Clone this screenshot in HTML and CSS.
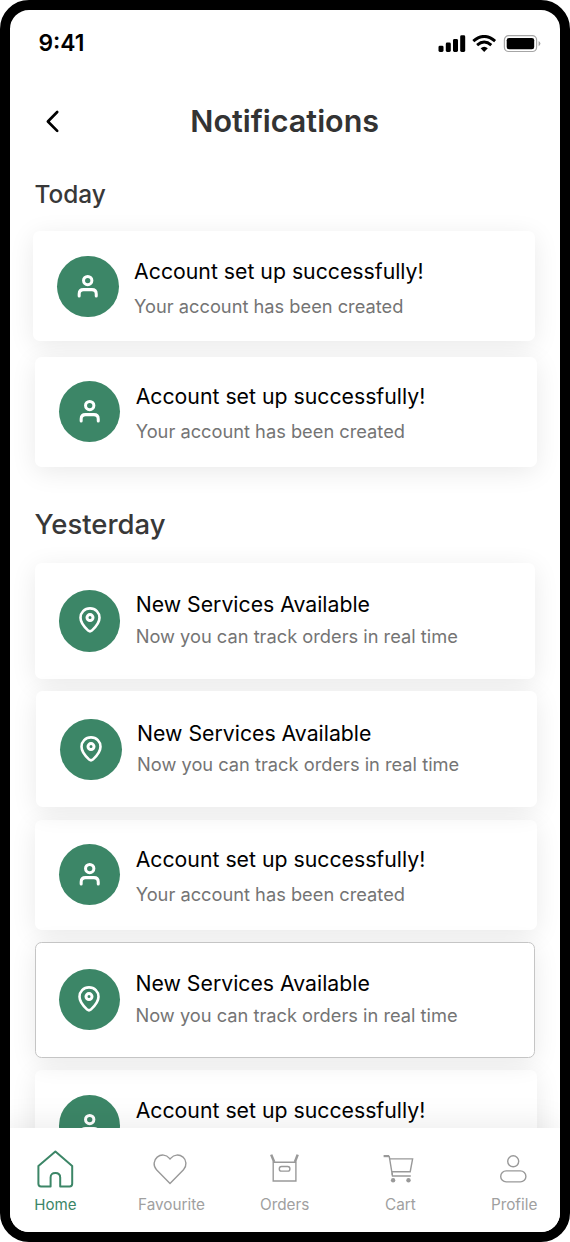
FILE: index.html
```html
<!DOCTYPE html>
<html lang="en">
<head>
<meta charset="utf-8">
<title>Notifications</title>
<link rel="stylesheet" href="styles.css">
</head>
<body>
<svg width="0" height="0" class="defs">
  <symbol id="user" viewBox="0 0 24 24"><g fill="none" stroke="#fff" stroke-width="2.9" stroke-linecap="round"><circle cx="12.2" cy="6.3" r="4"/><path d="M4 21.2V19.2Q4 15 8.200 15H16.200Q20.400 15 20.400 19.200V21.200"/></g></symbol>
  <symbol id="pin" viewBox="0 0 24 26"><g fill="none" stroke="#fff" stroke-width="2.6" stroke-linejoin="round"><path d="M12 1.400C6.400 1.400 2.500 5.700 2.500 10.800C2.500 16.200 6.300 20.100 10.200 23.600Q12 25.100 13.800 23.600C17.700 20.100 21.500 16.200 21.500 10.800C21.500 5.700 17.600 1.400 12 1.400Z"/><circle cx="12" cy="10.600" r="3" stroke-width="3"/></g></symbol>
</svg>
<div class="phone">
  <main class="screen">
    <div class="status">
      <span class="time">9:41</span>
      <svg class="indicators" width="104" height="20" viewBox="0 0 104 20">
        <rect x="0.500" y="10.700" width="5" height="6.300" rx="1.400"/>
        <rect x="7.800" y="7.500" width="5" height="9.500" rx="1.400"/>
        <rect x="15" y="4" width="5" height="13" rx="1.400"/>
        <rect x="22.200" y="0.300" width="5" height="16.700" rx="1.400"/>
        <g fill="none" stroke="#000" stroke-width="2.900"><path d="M35.300 6.100Q46.200-3.300 57.100 6.100"/><path d="M39.100 10.100Q46.200 4.100 53.300 10.100"/></g>
        <path d="M42.600 13.300Q46.200 10.300 49.800 13.300L46.200 16.900Z"/>
        <rect x="66.400" y="0.600" width="32.200" height="15.900" rx="4.300" fill="#fff" stroke="#a6a6a6" stroke-width="1.200"/>
        <rect x="68.700" y="2.900" width="27.500" height="11.300" rx="2.300"/>
        <path d="M100.600 5.900Q102.400 7 102.400 8.500T100.600 11.200Z" fill="#a0a0a0"/>
      </svg>
    </div>
    <header class="header">
      <svg class="back" width="16" height="24" viewBox="0 0 16 24"><path d="M13.200 3L3.900 12.500L13.200 21.900" fill="none" stroke="#000" stroke-width="2.700" stroke-linecap="round" stroke-linejoin="round"/></svg>
      <h1>Notifications</h1>
    </header>
    <h2 class="today">Today</h2>
    <section class="list">
      <article class="card first"><span class="disc"><svg class="user"><use href="#user"/></svg></span><div><h3>Account set up successfully!</h3><p>Your account has been created</p></div></article>
      <article class="card"><span class="disc"><svg class="user"><use href="#user"/></svg></span><div><h3>Account set up successfully!</h3><p>Your account has been created</p></div></article>
    </section>
    <h2 class="yesterday">Yesterday</h2>
    <section class="list tight">
      <article class="card service"><span class="disc"><svg class="pin"><use href="#pin"/></svg></span><div><h3>New Services Available</h3><p>Now you can track orders in real time</p></div></article>
      <article class="card service shifted"><span class="disc"><svg class="pin"><use href="#pin"/></svg></span><div><h3>New Services Available</h3><p>Now you can track orders in real time</p></div></article>
      <article class="card"><span class="disc"><svg class="user"><use href="#user"/></svg></span><div><h3>Account set up successfully!</h3><p>Your account has been created</p></div></article>
      <article class="card service outlined"><span class="disc"><svg class="pin"><use href="#pin"/></svg></span><div><h3>New Services Available</h3><p>Now you can track orders in real time</p></div></article>
      <article class="card last"><span class="disc"><svg class="user"><use href="#user"/></svg></span><div><h3>Account set up successfully!</h3></div></article>
    </section>
  </main>
  <nav class="tabs">
    <a class="tab active"><svg width="40" height="40" viewBox="0 0 40 40"><path d="M20.400 2.500L37.200 17V34.800Q37.200 37.500 34.600 37.500H25.200V28.500Q25.200 24 20.400 24T15.600 28.500V37.500H6Q3.400 37.500 3.400 34.800V17Z" stroke-width="2" stroke-linejoin="round"/></svg><span>Home</span></a>
    <a class="tab favourite"><svg width="40" height="40" viewBox="0 0 40 40"><path d="M18 34.500L4.500 20.700C0.800 16.800 1.700 11.100 5.200 8.100C9 5 14.300 5.500 17.200 9.100L18 10.100L18.900 9.100C22 5.500 27.200 5 31 8.100C34.400 11.100 35.200 16.800 31.500 20.700Z" stroke-width="1.400" stroke-linejoin="round"/></svg><span>Favourite</span></a>
    <a class="tab"><svg width="40" height="40" viewBox="0 0 40 40"><path d="M8.200 13.200H30.900V32H8.200Z" stroke-width="1.400"/><path d="M9.200 13L6.200 5.600M29.900 13L32.700 5.600" stroke-width="2.500"/><rect x="14.300" y="17.500" width="10.600" height="4.600" rx="2.200" stroke-width="1.400"/></svg><span>Orders</span></a>
    <a class="tab cart"><svg width="40" height="40" viewBox="0 0 40 40"><path d="M3.600 7.100H9.200" stroke-width="2.200"/><path d="M9.200 7.100L12.500 27H30.800M9.700 9.900H32.600L30.200 22.700H12" stroke-width="1.400"/><path d="M12.300 23.500V26.300" stroke-width="1.400"/><g fill="#999" stroke="none"><circle cx="13.100" cy="31.300" r="2.200"/><circle cx="28.500" cy="31.300" r="2.200"/></g></svg><span>Cart</span></a>
    <a class="tab"><svg width="40" height="40" viewBox="0 0 40 40"><g stroke-width="1.400"><circle cx="19.200" cy="12.300" r="5.500"/><rect x="6.700" y="21.900" width="25.200" height="11" rx="5.500"/></g></svg><span>Profile</span></a>
  </nav>
</div>
</body>
</html>
```
FILE: styles.css
```css
* { box-sizing: border-box; margin: 0; padding: 0; }
body { background: #fff; font-family: Inter, "Liberation Sans", sans-serif; }
.defs { display: block; }
.phone { width: 570px; height: 1242px; border: 10px solid #000; border-radius: 29px; background: #fff; display: flex; flex-direction: column; overflow: hidden; }
.screen { height: 1118px; overflow: hidden; flex: none; }
.status { height: 74px; padding: 19px 18px 0 28.500px; display: flex; justify-content: space-between; align-items: flex-start; }
.time { font-size: 22.800px; line-height: 28px; font-weight: 600; }
.indicators { margin-top: 6px; }
.header { height: 74px; display: flex; align-items: center; padding-left: 34px; }
.header h1 { margin-left: 130.300px; font-size: 30.500px; line-height: 40px; font-weight: 600; color: #333; }
h2 { font-weight: 500; color: #383838; padding-left: 24.500px; white-space: nowrap; }
.today { font-size: 24.400px; line-height: 32px; padding-top: 20px; height: 73.400px; }
.list { padding-left: 24.700px; display: flex; flex-direction: column; gap: 15.200px; }
.tight { gap: 12.200px; }
.card { width: 502.300px; height: 110px; flex: none; border-radius: 6.500px; background: #fff; box-shadow: 0 5px 26px rgba(0, 0, 0, .085); padding: 24.500px 0 0 24.200px; display: flex; gap: 15.500px; position: relative; }
.first { margin-left: -1.600px; }
.disc { width: 61.300px; height: 61.300px; border-radius: 50%; background: #3c8667; display: flex; align-items: center; justify-content: center; flex: none; }
.user { width: 25px; height: 25px; }
.pin { width: 24px; height: 26px; margin-top: -1px; }
h3 { font-size: 21.250px; line-height: 28px; font-weight: 400; color: #000; white-space: nowrap; padding-top: 1px; }
p { font-size: 18.250px; line-height: 24px; font-weight: 400; color: #747474; white-space: nowrap; margin-top: 9px; }
.service { width: 500.600px; height: 116.300px; padding-top: 27.700px; }
.service p { margin-top: 5.700px; }
.service h3 { padding-top: 0; }
.shifted { margin-left: 1.400px; z-index: 1; }
.outlined { border: 1.300px solid #c5c5c5; padding: 26.400px 0 0 23px; z-index: 1; }
.yesterday { font-size: 27.500px; line-height: 36px; height: 96px; padding-top: 39.300px; }
.tabs { flex: 1; background: #fff; display: grid; grid-template-columns: repeat(5, 114.700px); margin-left: -12px; box-shadow: 0 -4px 30px rgba(0, 0, 0, .08); z-index: 2; padding-top: 21px; }
.tab { display: flex; flex-direction: column; align-items: center; color: #999; font-size: 15.300px; line-height: 20px; font-weight: 400; }
.tab svg { fill: none; stroke: currentColor; }
.tab span { margin-top: 5.600px; color: #a0a0a0; }
.favourite { padding-left: 3px; }
.cart { padding-left: 2px; }
.active { color: #3c8667; font-size: 15.100px; }
.active span { color: #3c8667; }
```
